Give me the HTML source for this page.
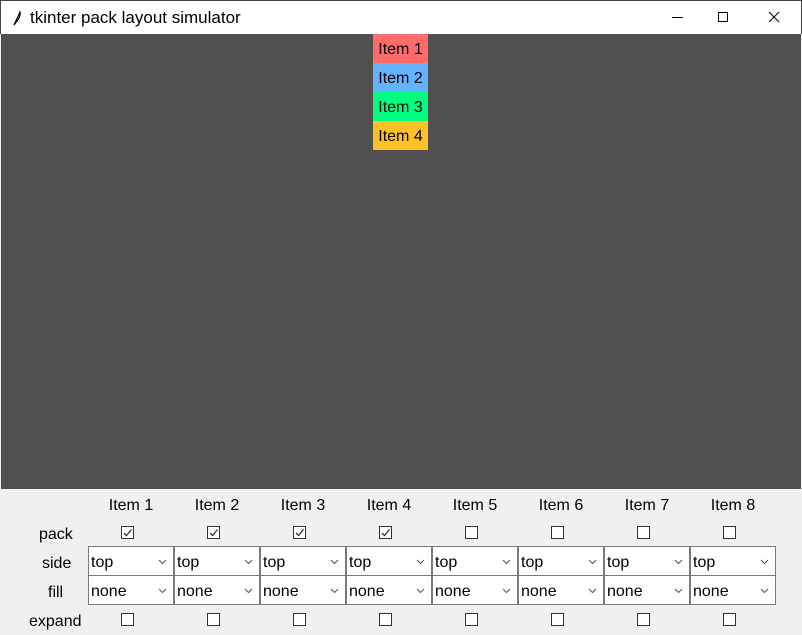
<!DOCTYPE html>
<html><head><style>
*{margin:0;padding:0;box-sizing:border-box}
body{width:802px;height:635px;overflow:hidden;background:#f0f0f0;font-family:"Liberation Sans",sans-serif;position:relative}
.a{position:absolute}
.t{font-size:16px;color:#000;white-space:nowrap}
.cb{position:absolute;width:13px;height:13px;border:1px solid #333;background:#fff}
.cmb{position:absolute;width:86px;height:30px;border:1px solid #7a7a7a;background:#fff;font-size:16px;padding:7px 0 0 2px}
.cmb svg{position:absolute;right:6px;top:12px}
.it{position:absolute;left:373px;width:55px;height:29px;font-size:16px;text-align:center;line-height:31px}
</style></head><body>
<div class="a" style="left:0;top:0;width:802px;height:34px;background:#fff;border:1px solid #444;border-bottom:none"></div>
<svg class="a" style="left:12px;top:10px" width="10" height="16" viewBox="0 0 10 16"><path d="M2 15 L8 2 Q9 6 5 11 Z" fill="none" stroke="#000" stroke-width="1.2"/></svg>
<div class="a t" style="left:30px;top:8px;font-size:17px">tkinter pack layout simulator</div>
<div class="a" style="left:672px;top:17px;width:11px;height:1px;background:#000"></div>
<div class="a" style="left:718px;top:12px;width:10px;height:10px;border:1px solid #000"></div>
<svg class="a" style="left:768px;top:11px" width="12" height="12"><path d="M1 1L11 11M11 1L1 11" stroke="#000" stroke-width="1"/></svg>
<div class="a" style="left:1px;top:34px;width:800px;height:455px;background:#505050"></div>
<div class="it" style="top:34px;background:#ff6b6b">Item 1</div>
<div class="it" style="top:63px;background:#63b3ff">Item 2</div>
<div class="it" style="top:92px;background:#00ff7f">Item 3</div>
<div class="it" style="top:121px;background:#ffc125">Item 4</div>
<div class="a t" style="left:39px;top:526px">pack</div>
<div class="a t" style="left:42px;top:555px">side</div>
<div class="a t" style="left:48px;top:584px">fill</div>
<div class="a t" style="left:29px;top:613px">expand</div>
<div id="g"></div>
<script>
var h='';
for(var i=0;i<8;i++){
 var x=88+86*i, c=x+43;
 h+='<div class="a t" style="left:'+(c-25)+'px;width:50px;text-align:center;top:497px">Item '+(i+1)+'</div>';
 h+='<div class="cb" style="left:'+(c-10)+'px;top:526px">'+(i<4?'<svg width="11" height="11" style="position:absolute;left:0;top:0"><path d="M2 6L4.5 8.5L9.5 2.5" fill="none" stroke="#333" stroke-width="1.3"/></svg>':'')+'</div>';
 h+='<div class="cmb" style="left:'+x+'px;top:546px">top<svg width="9" height="6"><path d="M1 1L4.5 4.5L8 1" fill="none" stroke="#555"/></svg></div>';
 h+='<div class="cmb" style="left:'+x+'px;top:575px">none<svg width="9" height="6"><path d="M1 1L4.5 4.5L8 1" fill="none" stroke="#555"/></svg></div>';
 h+='<div class="cb" style="left:'+(c-10)+'px;top:613px"></div>';
}
document.getElementById('g').innerHTML=h;
</script>
</body></html>
